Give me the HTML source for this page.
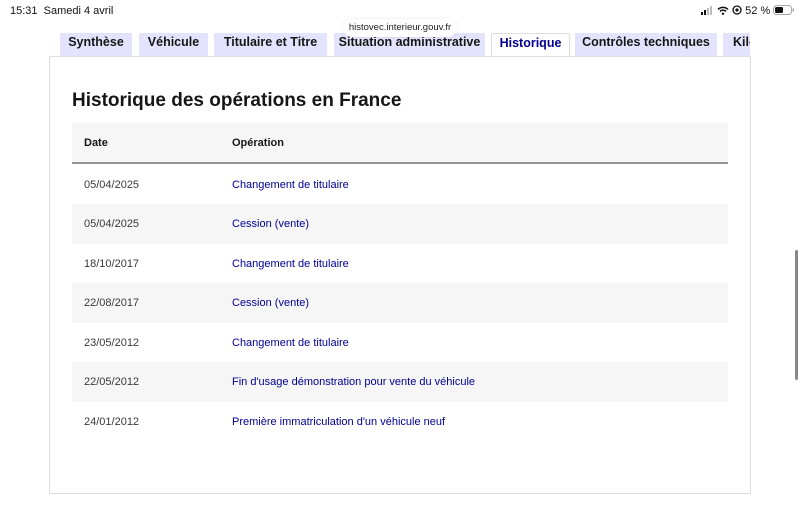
<!DOCTYPE html>
<html><head><meta charset="utf-8"><style>
*{margin:0;padding:0;box-sizing:border-box}
body{width:800px;height:525px;background:#fff;font-family:"Liberation Sans",sans-serif;position:relative;overflow:hidden;color:#161616}
.sb{position:absolute;top:5px;font-size:11px;color:#111}
.url{position:absolute;left:343px;top:19px;width:114px;height:18px;background:#fff;border-radius:9px;font-size:9.5px;text-align:center;line-height:18px;color:#222;box-shadow:0 0 4px rgba(0,0,0,.08);z-index:3}
.tab{position:absolute;top:33px;height:23px;background:#e3e3fd;font-size:12.5px;font-weight:bold;color:#161616;text-align:center;overflow:hidden;white-space:nowrap}
.tab b{display:block;margin-top:0;line-height:18px}
.tab.act{background:#fff;color:#000091;border:1px solid #ddd;border-bottom:none;height:24px}
.clip{position:absolute;left:0;top:28px;width:800px;height:8px;background:#fff;z-index:2}
.panel{position:absolute;left:49px;top:56px;width:702px;height:438px;border:1px solid #ddd;background:#fff}
h1{position:absolute;left:72px;top:90px;font-size:19px;font-weight:bold;color:#161616}
.th{position:absolute;left:72px;top:123px;width:656px;height:41px;background:#f6f6f6;border-bottom:2px solid #929292}
.th span,.row span{position:absolute;font-size:11px}
.th span{top:14px;font-weight:bold}
.row{position:absolute;left:72px;width:656px;height:39.5px}
.row span{top:14px}
.row .d{left:12px;color:#3a3a3a}
.row .o{left:160px;color:#000091}
.g{background:#f6f6f6}
</style></head><body>
<div class="sb" style="left:10px">15:31&nbsp; Samedi 4 avril</div>
<div class="sb" style="left:701px;font-size:11px">
<svg width="13" height="9" style="vertical-align:-1px"><rect x="0" y="6" width="2" height="3" fill="#111"/><rect x="3" y="4" width="2" height="5" fill="#111"/><rect x="6" y="2" width="2" height="7" fill="#bbb"/><rect x="9" y="0" width="2" height="9" fill="#bbb"/></svg>
<svg width="12" height="9" style="vertical-align:-1px"><path d="M1 3.5A7 7 0 0 1 11 3.5M3 5.5A4 4 0 0 1 9 5.5" stroke="#111" stroke-width="1.5" fill="none"/><circle cx="6" cy="7.8" r="1.2" fill="#111"/></svg>
<svg width="10" height="10" style="vertical-align:-1px"><circle cx="5" cy="5" r="4" stroke="#111" stroke-width="1.3" fill="none"/><circle cx="5" cy="5" r="1.6" fill="#111"/></svg>
52 %
<svg width="22" height="10" style="vertical-align:-1px"><rect x="0.5" y="0.5" width="18" height="9" rx="3" stroke="#aaa" fill="none"/><rect x="2" y="2" width="8" height="6" rx="1.5" fill="#111"/><rect x="19.5" y="3.5" width="1.5" height="3" fill="#aaa"/></svg>
</div>
<div class="url">histovec.interieur.gouv.fr</div>
<div class="tab" style="left:60px;width:72px"><b>Synthèse</b></div>
<div class="tab" style="left:139px;width:69px"><b>Véhicule</b></div>
<div class="tab" style="left:214px;width:113px"><b>Titulaire et Titre</b></div>
<div class="tab" style="left:334px;width:151px"><b>Situation administrative</b></div>
<div class="tab act" style="left:491px;width:79px"><b>Historique</b></div>
<div class="tab" style="left:575px;width:142px"><b>Contrôles techniques</b></div>
<div class="tab" style="left:723px;width:27px;text-align:left;padding-left:10px"><b>Kilométrage</b></div>
<div class="panel"></div>
<h1>Historique des opérations en France</h1>
<div class="th"><span style="left:12px">Date</span><span style="left:160px">Opération</span></div>
<div class="row" style="top:165px"><span class="d">05/04/2025</span><span class="o">Changement de titulaire</span></div>
<div class="row g" style="top:204px"><span class="d">05/04/2025</span><span class="o">Cession (vente)</span></div>
<div class="row" style="top:244px"><span class="d">18/10/2017</span><span class="o">Changement de titulaire</span></div>
<div class="row g" style="top:283px"><span class="d">22/08/2017</span><span class="o">Cession (vente)</span></div>
<div class="row" style="top:323px"><span class="d">23/05/2012</span><span class="o">Changement de titulaire</span></div>
<div class="row g" style="top:362px"><span class="d">22/05/2012</span><span class="o">Fin d'usage démonstration pour vente du véhicule</span></div>
<div class="row" style="top:402px"><span class="d">24/01/2012</span><span class="o">Première immatriculation d'un véhicule neuf</span></div>
<div style="position:absolute;left:795px;top:250px;width:3px;height:130px;background:#888;border-radius:2px"></div>
</body></html>
